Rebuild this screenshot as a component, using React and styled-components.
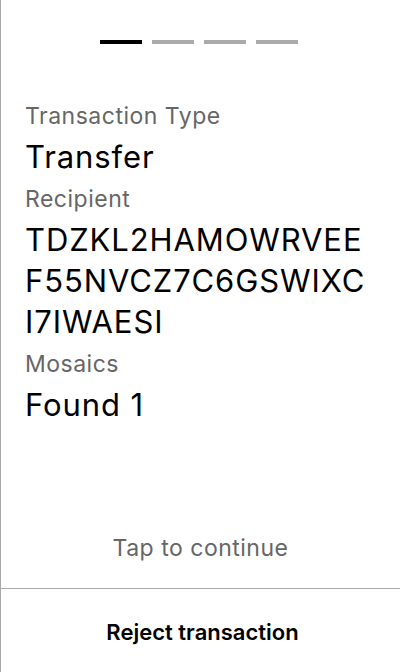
import React from 'react';
import styled, { createGlobalStyle } from 'styled-components';

const GlobalStyle = createGlobalStyle`
  html, body {
    margin: 0;
    padding: 0;
    background: #fff;
  }
  body {
    font-family: Inter, "Noto Sans", sans-serif;
    color: #000;
  }
`;

const Screen = styled.div`
  box-sizing: border-box;
  height: 672px;
  border-left: 1px solid #a8a8a8;
  display: flex;
  flex-direction: column;
  background: #fff;
`;

const Steps = styled.div`
  display: flex;
  justify-content: center;
  gap: 10px;
  margin-top: 40px;
  padding-right: 3px;
`;

const Step = styled.div`
  width: 42px;
  height: 4px;
  background: ${props => (props.$active ? '#000' : '#aaaaaa')};
`;

const Details = styled.div`
  padding: 58px 30px 0 24px;
  display: flex;
  flex-direction: column;
`;

const Label = styled.div`
  font-size: 23px;
  line-height: 28px;
  letter-spacing: 0.5px;
  color: #666;
  margin-bottom: 6px;
`;

const Value = styled.div`
  font-size: 31px;
  line-height: 41px;
  letter-spacing: 0.9px;
  color: #000;
  margin-bottom: 8px;
  word-break: break-all;
`;

const Spacer = styled.div`
  flex: 1;
`;

const Hint = styled.div`
  text-align: center;
  font-size: 23px;
  line-height: 28px;
  letter-spacing: 0.5px;
  color: #666;
  margin-bottom: 26px;
`;

const RejectButton = styled.button`
  border: none;
  border-top: 1px solid #aaa;
  background: transparent;
  height: 84px;
  font: inherit;
  font-size: 22px;
  font-weight: 600;
  color: #000;
  padding: 2px 0 0 4px;
  cursor: pointer;
`;

const fields = [
  { label: 'Transaction Type', value: 'Transfer' },
  { label: 'Recipient', value: 'TDZKL2HAMOWRVEEF55NVCZ7C6GSWIXCI7IWAESI' },
  { label: 'Mosaics', value: 'Found 1' }
];

const App = () => {
  return (
    <>
      <GlobalStyle />
      <Screen>
        <Steps>
          <Step $active />
          <Step />
          <Step />
          <Step />
        </Steps>
        <Details>
          {fields.map(f => (
            <React.Fragment key={f.label}>
              <Label>{f.label}</Label>
              <Value>{f.value}</Value>
            </React.Fragment>
          ))}
        </Details>
        <Spacer />
        <Hint>Tap to continue</Hint>
        <RejectButton>Reject transaction</RejectButton>
      </Screen>
    </>
  );
};

export default App;
